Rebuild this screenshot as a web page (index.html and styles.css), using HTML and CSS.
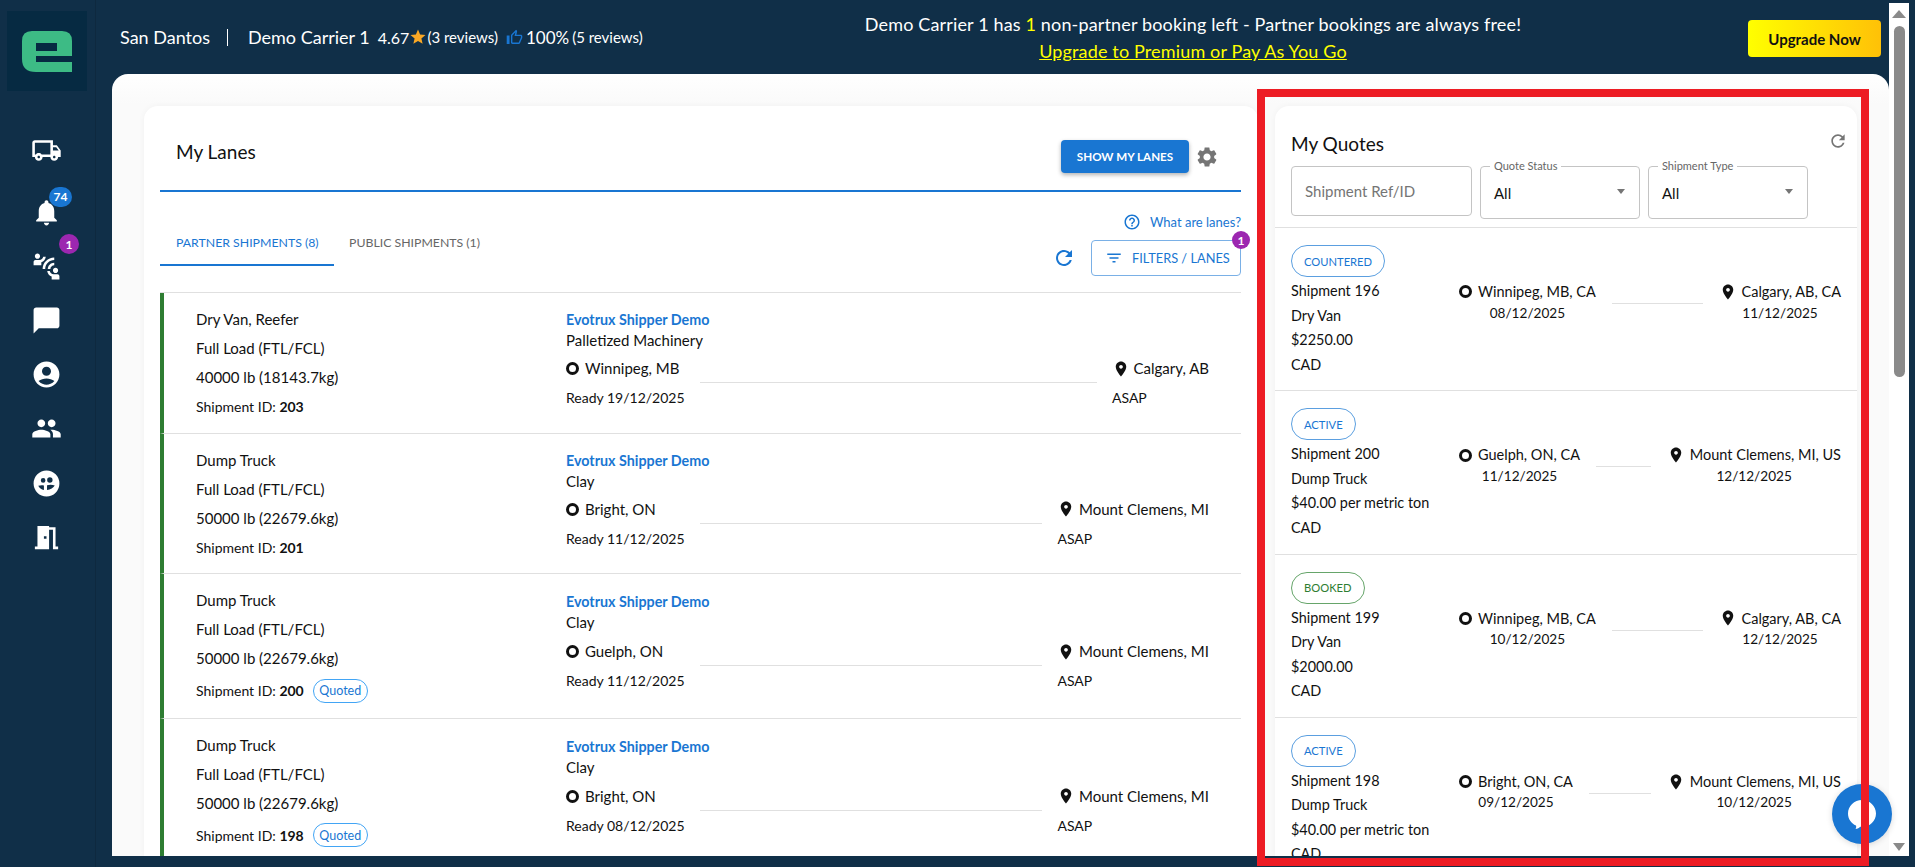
FILE: index.html
```html
<!DOCTYPE html>
<html lang="en">
<head>
<meta charset="UTF-8">
<title>My Lanes</title>
<link rel="stylesheet" href="styles.css">
</head>
<body>
<svg class="sprite" xmlns="http://www.w3.org/2000/svg">
 <symbol id="i-truck" viewBox="0 0 24 24"><path d="M20 8h-3V4H3c-1.1 0-2 .9-2 2v11h2c0 1.66 1.34 3 3 3s3-1.34 3-3h6c0 1.66 1.34 3 3 3s3-1.34 3-3h2v-5l-3-4zm-.5 1.5 1.96 2.5H17V9.5h2.5zM6 18c-.55 0-1-.45-1-1s.45-1 1-1 1 .45 1 1-.45 1-1 1zm2.22-3c-.55-.61-1.33-1-2.22-1s-1.67.39-2.22 1H3V6h12v9H8.22zM18 18c-.55 0-1-.45-1-1s.45-1 1-1 1 .45 1 1-.45 1-1 1z"/></symbol>
 <symbol id="i-bell" viewBox="0 0 24 24"><path d="M12 22c1.1 0 2-.9 2-2h-4c0 1.1.9 2 2 2zm6-6v-5c0-3.07-1.63-5.64-4.5-6.32V4c0-.83-.67-1.5-1.5-1.5s-1.5.67-1.5 1.5v.68C7.64 5.36 6 7.92 6 11v5l-2 2v1h16v-1l-2-2z"/></symbol>
 <symbol id="i-connect" viewBox="0 0 24 24"><path d="M11 14H9c0-4.97 4.03-9 9-9v2c-3.87 0-7 3.13-7 7zm7-3V9c-2.76 0-5 2.24-5 5h2c0-1.66 1.34-3 3-3zM7 4c0-1.11-.89-2-2-2s-2 .89-2 2 .89 2 2 2 2-.89 2-2zm4.45.5h-2C9.21 5.92 7.99 7 6.5 7h-3C2.67 7 2 7.67 2 8.5V11h6V8.74c1.86-.59 3.25-2.23 3.45-4.24zM19 17c1.11 0 2-.89 2-2s-.89-2-2-2-2 .89-2 2 .89 2 2 2zm1.5 1h-3c-1.49 0-2.71-1.08-2.95-2.5h-2c.2 2.01 1.59 3.65 3.45 4.24V22h6v-2.5c0-.83-.67-1.5-1.5-1.5z"/></symbol>
 <symbol id="i-chat" viewBox="0 0 24 24"><path d="M20 2H4c-1.1 0-2 .9-2 2v18l4-4h14c1.1 0 2-.9 2-2V4c0-1.1-.9-2-2-2z"/></symbol>
 <symbol id="i-account" viewBox="0 0 24 24"><path d="M12 2C6.48 2 2 6.48 2 12s4.48 10 10 10 10-4.48 10-10S17.52 2 12 2zm0 4c1.93 0 3.5 1.57 3.5 3.5S13.93 13 12 13s-3.5-1.57-3.5-3.5S10.07 6 12 6zm0 14c-2.03 0-4.43-.82-6.14-2.88C7.55 15.8 9.68 15 12 15s4.45.8 6.14 2.12C16.43 19.18 14.03 20 12 20z"/></symbol>
 <symbol id="i-people" viewBox="0 0 24 24"><path d="M16 11c1.66 0 2.99-1.34 2.99-3S17.66 5 16 5c-1.66 0-3 1.34-3 3s1.34 3 3 3zm-8 0c1.66 0 2.99-1.34 2.99-3S9.66 5 8 5C6.34 5 5 6.34 5 8s1.34 3 3 3zm0 2c-2.33 0-7 1.17-7 3.5V19h14v-2.5c0-2.33-4.67-3.5-7-3.5zm8 0c-.29 0-.62.02-.97.05 1.16.84 1.97 1.97 1.97 3.45V19h6v-2.5c0-2.33-4.67-3.5-7-3.5z"/></symbol>
 <symbol id="i-drivers" viewBox="0 0 24 24"><path fill-rule="evenodd" d="M12 2a10 10 0 1 0 0 20 10 10 0 0 0 0-20zM9.400 7.800a1.800 1.800 0 1 1 0 3.600 1.800 1.800 0 0 1 0-3.600zm5.200-.6a2.100 2.100 0 1 1 0 4.200 2.100 2.100 0 0 1 0-4.200zM5.600 13.800c1.500-.6 3-.7 4.400-.3v3.600c-2-.3-3.600-1.600-4.400-3.300zm6.800-.4c2-.7 4.200-.6 6 .2-.9 1.700-3.400 3.300-6 3.500z"/></symbol>
 <symbol id="i-door" viewBox="0 0 24 24"><path d="M14 6v15H3v-2h2V3h9v1h5v15h2v2h-4V6h-3zm-4 5v2h2v-2h-2z"/></symbol>
 <symbol id="i-gear" viewBox="0 0 24 24"><path d="M19.14 12.94c.04-.3.06-.61.06-.94 0-.32-.02-.64-.07-.94l2.030-1.580c.18-.14.23-.41.12-.61l-1.920-3.320c-.12-.22-.37-.29-.59-.22l-2.390.96c-.5-.38-1.030-.7-1.620-.94l-.36-2.540c-.04-.24-.24-.41-.48-.41h-3.840c-.24 0-.43.17-.47.41l-.36 2.540c-.59.24-1.130.57-1.620.94l-2.390-.96c-.22-.08-.47 0-.59.22L2.740 8.870c-.12.21-.08.47.12.61l2.030 1.580c-.05.3-.09.63-.09.94s.02.64.07.94l-2.030 1.580c-.18.14-.23.41-.12.61l1.920 3.320c.12.22.37.29.59.22l2.390-.96c.5.38 1.030.7 1.620.94l.36 2.540c.05.24.24.41.48.41h3.840c.24 0 .44-.17.47-.41l.36-2.540c.59-.24 1.130-.56 1.620-.94l2.390.96c.22.08.47 0 .59-.22l1.920-3.320c.12-.22.07-.47-.12-.61l-2.010-1.580zM12 15.600c-1.980 0-3.600-1.620-3.600-3.600s1.620-3.600 3.600-3.600 3.600 1.620 3.600 3.600-1.620 3.600-3.600 3.600z"/></symbol>
 <symbol id="i-refresh" viewBox="0 0 24 24"><path d="M17.650 6.350C16.200 4.900 14.210 4 12 4c-4.420 0-7.990 3.580-7.990 8s3.570 8 7.990 8c3.730 0 6.840-2.550 7.730-6h-2.080c-.82 2.330-3.040 4-5.650 4-3.310 0-6-2.690-6-6s2.690-6 6-6c1.660 0 3.140.69 4.220 1.780L13 11h7V4l-2.350 2.350z"/></symbol>
 <symbol id="i-filter" viewBox="0 0 24 24"><path d="M10 18h4v-2h-4v2zM3 6v2h18V6H3zm3 7h12v-2H6v2z"/></symbol>
 <symbol id="i-help" viewBox="0 0 24 24"><path d="M11 18h2v-2h-2v2zm1-16C6.480 2 2 6.480 2 12s4.480 10 10 10 10-4.480 10-10S17.520 2 12 2zm0 18c-4.410 0-8-3.590-8-8s3.590-8 8-8 8 3.590 8 8-3.590 8-8 8zm0-14c-2.210 0-4 1.790-4 4h2c0-1.100.9-2 2-2s2 .9 2 2c0 2-3 1.750-3 5h2c0-2.250 3-2.500 3-5 0-2.210-1.790-4-4-4z"/></symbol>
 <symbol id="i-pin" viewBox="0 0 24 24"><path d="M12 2C8.130 2 5 5.130 5 9c0 5.250 7 13 7 13s7-7.750 7-13c0-3.870-3.130-7-7-7zm0 9.500c-1.380 0-2.500-1.120-2.500-2.500s1.120-2.500 2.500-2.500 2.500 1.120 2.500 2.500-1.120 2.500-2.500 2.500z"/></symbol>
 <symbol id="i-star" viewBox="0 0 24 24"><path d="M12 17.270 18.180 21l-1.640-7.030L22 9.240l-7.190-.61L12 2 9.190 8.630 2 9.240l5.460 4.730L5.820 21z"/></symbol>
 <symbol id="i-thumb" viewBox="0 0 24 24"><path d="M9 21h9c.83 0 1.540-.5 1.840-1.220l3.020-7.050c.09-.23.14-.47.14-.73v-2c0-1.100-.9-2-2-2h-6.310l.95-4.570.03-.32c0-.41-.17-.79-.44-1.060L14.170 1 7.580 7.590C7.220 7.950 7 8.450 7 9v10c0 1.100.9 2 2 2zM9 9l4.340-4.340L12 10h9v2l-3 7H9V9zM1 9h4v12H1z"/></symbol>
</svg>

<div class="app">
 <aside class="sidebar">
  <div class="logo">
   <svg width="50" height="41" viewBox="0 0 50 41"><path fill="#3dbb85" fill-rule="evenodd" d="M10 0H40Q50 0 50 10V25H14V31H50V41H14Q0 41 0 28V10Q0 0 10 0ZM14 12V20H35V12Z"/></svg>
  </div>
  <nav class="side-nav">
   <a class="side-item first"><svg class="side-icon"><use href="#i-truck"/></svg></a>
   <a class="side-item"><svg class="side-icon"><use href="#i-bell"/></svg><span class="badge badge-blue">74</span></a>
   <a class="side-item"><svg class="side-icon"><use href="#i-connect"/></svg><span class="badge badge-purple">1</span></a>
   <a class="side-item"><svg class="side-icon"><use href="#i-chat"/></svg></a>
   <a class="side-item"><svg class="side-icon"><use href="#i-account"/></svg></a>
   <a class="side-item"><svg class="side-icon"><use href="#i-people"/></svg></a>
   <a class="side-item"><svg class="side-icon"><use href="#i-drivers"/></svg></a>
   <a class="side-item"><svg class="side-icon"><use href="#i-door"/></svg></a>
  </nav>
 </aside>

 <div class="center">
  <header class="topbar">
   <div class="who">
    <span class="who-name">San Dantos</span><span class="who-sep"></span><span class="who-name">Demo Carrier 1</span>
    <span class="rating">4.67</span><svg class="star"><use href="#i-star"/></svg><span class="reviews">(3 reviews)</span>
    <svg class="thumb"><use href="#i-thumb"/></svg><span class="percent">100%</span><span class="reviews wide">(5 reviews)</span>
   </div>
   <div class="banner">
    <div>Demo Carrier 1 has <span class="yellow">1</span> non-partner booking left - Partner bookings are always free!</div>
    <a class="upgrade-link">Upgrade to Premium or Pay As You Go</a>
   </div>
   <a class="upgrade-btn">Upgrade Now</a>
  </header>

  <main class="panel">
   <section class="card lanes">
    <div class="lanes-head">
     <h2 class="card-title">My Lanes</h2>
     <a class="btn-primary">SHOW MY LANES</a>
     <svg class="gear"><use href="#i-gear"/></svg>
    </div>
    <div class="lanes-tools">
     <div class="tabs">
      <a class="tab active">PARTNER SHIPMENTS (8)</a>
      <a class="tab">PUBLIC SHIPMENTS (1)</a>
     </div>
     <div class="tools-right">
      <a class="what"><svg class="what-icon"><use href="#i-help"/></svg>What are lanes?</a>
      <div class="filter-row">
       <svg class="refresh"><use href="#i-refresh"/></svg>
       <a class="btn-filter"><svg class="filter-icon"><use href="#i-filter"/></svg>FILTERS / LANES<span class="badge-small">1</span></a>
      </div>
     </div>
    </div>
    <div class="lane-list">
     <div class="lane">
      <div class="lane-info">
       <div>Dry Van, Reefer</div>
       <div>Full Load (FTL/FCL)</div>
       <div>40000 lb (18143.7kg)</div>
       <div class="id-line">Shipment ID: <b>203</b></div>
      </div>
      <div class="lane-detail">
       <a class="shipper">Evotrux Shipper Demo</a>
       <div>Palletized Machinery</div>
       <div class="route">
        <div><div class="place"><span class="ring"></span>Winnipeg, MB</div><div class="when">Ready 19/12/2025</div></div>
        <div class="route-line"></div>
        <div><div class="place"><svg class="pin"><use href="#i-pin"/></svg>Calgary, AB</div><div class="when">ASAP</div></div>
       </div>
      </div>
     </div>
     <div class="lane">
      <div class="lane-info">
       <div>Dump Truck</div>
       <div>Full Load (FTL/FCL)</div>
       <div>50000 lb (22679.6kg)</div>
       <div class="id-line">Shipment ID: <b>201</b></div>
      </div>
      <div class="lane-detail">
       <a class="shipper">Evotrux Shipper Demo</a>
       <div>Clay</div>
       <div class="route">
        <div><div class="place"><span class="ring"></span>Bright, ON</div><div class="when">Ready 11/12/2025</div></div>
        <div class="route-line"></div>
        <div><div class="place"><svg class="pin"><use href="#i-pin"/></svg>Mount Clemens, MI</div><div class="when">ASAP</div></div>
       </div>
      </div>
     </div>
     <div class="lane quoted">
      <div class="lane-info">
       <div>Dump Truck</div>
       <div>Full Load (FTL/FCL)</div>
       <div>50000 lb (22679.6kg)</div>
       <div class="id-line">Shipment ID: <b>200</b><span class="chip-quoted">Quoted</span></div>
      </div>
      <div class="lane-detail">
       <a class="shipper">Evotrux Shipper Demo</a>
       <div>Clay</div>
       <div class="route">
        <div><div class="place"><span class="ring"></span>Guelph, ON</div><div class="when">Ready 11/12/2025</div></div>
        <div class="route-line"></div>
        <div><div class="place"><svg class="pin"><use href="#i-pin"/></svg>Mount Clemens, MI</div><div class="when">ASAP</div></div>
       </div>
      </div>
     </div>
     <div class="lane quoted">
      <div class="lane-info">
       <div>Dump Truck</div>
       <div>Full Load (FTL/FCL)</div>
       <div>50000 lb (22679.6kg)</div>
       <div class="id-line">Shipment ID: <b>198</b><span class="chip-quoted">Quoted</span></div>
      </div>
      <div class="lane-detail">
       <a class="shipper">Evotrux Shipper Demo</a>
       <div>Clay</div>
       <div class="route">
        <div><div class="place"><span class="ring"></span>Bright, ON</div><div class="when">Ready 08/12/2025</div></div>
        <div class="route-line"></div>
        <div><div class="place"><svg class="pin"><use href="#i-pin"/></svg>Mount Clemens, MI</div><div class="when">ASAP</div></div>
       </div>
      </div>
     </div>
    </div>
   </section>

   <section class="card quotes">
    <div class="quotes-head">
     <div class="quotes-title">
      <h2 class="card-title">My Quotes</h2>
      <svg class="quotes-refresh"><use href="#i-refresh"/></svg>
     </div>
     <div class="quote-filters">
      <div class="field-search">Shipment Ref/ID</div>
      <div class="field-select"><span class="field-label">Quote Status</span>All<i class="caret"></i></div>
      <div class="field-select"><span class="field-label">Shipment Type</span>All<i class="caret"></i></div>
     </div>
    </div>
    <div class="quote">
     <span class="status">COUNTERED</span>
     <div class="quote-body">
      <div class="quote-info"><div>Shipment 196</div><div>Dry Van</div><div>$2250.00</div><div>CAD</div></div>
      <div class="quote-route">
       <div class="stop"><div class="place"><span class="ring"></span>Winnipeg, MB, CA</div><div class="stop-date">08/12/2025</div></div>
       <div class="quote-line"></div>
       <div class="stop"><div class="place"><svg class="pin"><use href="#i-pin"/></svg>Calgary, AB, CA</div><div class="stop-date">11/12/2025</div></div>
      </div>
     </div>
    </div>
    <div class="quote">
     <span class="status">ACTIVE</span>
     <div class="quote-body">
      <div class="quote-info"><div>Shipment 200</div><div>Dump Truck</div><div>$40.00 per metric ton</div><div>CAD</div></div>
      <div class="quote-route">
       <div class="stop"><div class="place"><span class="ring"></span>Guelph, ON, CA</div><div class="stop-date">11/12/2025</div></div>
       <div class="quote-line"></div>
       <div class="stop"><div class="place"><svg class="pin"><use href="#i-pin"/></svg>Mount Clemens, MI, US</div><div class="stop-date">12/12/2025</div></div>
      </div>
     </div>
    </div>
    <div class="quote">
     <span class="status green">BOOKED</span>
     <div class="quote-body">
      <div class="quote-info"><div>Shipment 199</div><div>Dry Van</div><div>$2000.00</div><div>CAD</div></div>
      <div class="quote-route">
       <div class="stop"><div class="place"><span class="ring"></span>Winnipeg, MB, CA</div><div class="stop-date">10/12/2025</div></div>
       <div class="quote-line"></div>
       <div class="stop"><div class="place"><svg class="pin"><use href="#i-pin"/></svg>Calgary, AB, CA</div><div class="stop-date">12/12/2025</div></div>
      </div>
     </div>
    </div>
    <div class="quote">
     <span class="status">ACTIVE</span>
     <div class="quote-body">
      <div class="quote-info"><div>Shipment 198</div><div>Dump Truck</div><div>$40.00 per metric ton</div><div>CAD</div></div>
      <div class="quote-route">
       <div class="stop"><div class="place"><span class="ring"></span>Bright, ON, CA</div><div class="stop-date">09/12/2025</div></div>
       <div class="quote-line"></div>
       <div class="stop"><div class="place"><svg class="pin"><use href="#i-pin"/></svg>Mount Clemens, MI, US</div><div class="stop-date">10/12/2025</div></div>
      </div>
     </div>
    </div>
   </section>
  </main>
 </div>

 <div class="scrollbar">
  <i class="scroll-up"></i>
  <div class="scroll-thumb"></div>
  <i class="scroll-down"></i>
 </div>
</div>

<div class="chat-widget">
 <svg width="32" height="32" viewBox="0 0 32 32"><path fill="#fff" d="M16 2C8.300 2 2 8 2 15.500c0 5.500 3.300 10 8 12 .4 1.300.2 2.500-.5 3.500 2 0 3.700-1 4.800-2.200.6.100 1.100.1 1.700.1 7.700 0 14-5.900 14-13.400S23.700 2 16 2z"/></svg>
</div>
<div class="red-frame"></div>
</body>
</html>
```

FILE: styles.css
```css
*{box-sizing:border-box}
html,body{margin:0;height:100%;overflow:hidden}
body{background:#102f48;color:#111;font-family:Lato,"Open Sans",sans-serif;font-size:15px}
a{cursor:pointer}
.sprite{display:none}
svg{fill:currentColor;display:block;flex:none}

.app{display:flex;height:867px;padding-bottom:11px}
.sidebar{width:96px;flex:none;margin:0 16px -11px 0;color:#fff;border-right:1px solid rgba(0,0,0,.12)}
.logo{width:80px;height:80px;margin:11px 0 0 7px;background:#062a42;display:flex;align-items:center;justify-content:center}
.side-nav{margin-top:32px;display:flex;flex-direction:column}
.side-item{position:relative;height:54.2px;width:92px;display:flex;align-items:center;justify-content:center}
.side-item.first{margin-bottom:7.8px}
.side-icon{width:31px;height:31px}
.badge{position:absolute;display:flex;align-items:center;justify-content:center;height:20px;border-radius:10px;font-size:12px;font-weight:700;color:#fff}
.badge-blue{left:49px;top:2px;width:23px;background:#1976d2}
.badge-purple{left:59px;top:-5px;width:20px;background:#9c27b0}

.center{flex:1;min-width:0;display:flex;flex-direction:column}
.topbar{height:74px;flex:none;display:flex;align-items:center;padding:0 8px;color:#fff;font-size:18px;letter-spacing:.15px}
.who{width:660px;flex:none;display:flex;align-items:center}
.who-name{letter-spacing:0}
.who-sep{width:1px;height:17px;background:#fff;margin:0 20px 0 17px}
.rating{margin-left:8px;font-size:16px;letter-spacing:0}
.star{width:18px;height:18px;color:#f9a825;margin:0}
.reviews{font-size:15px;letter-spacing:0}
.reviews.wide{margin-left:3px}
.thumb{width:17px;height:17px;color:#1976d2;margin:0 3px 0 8px}
.percent{font-size:17px;letter-spacing:0}
.banner{width:826px;flex:none;text-align:center;line-height:27px;margin-top:1px}
.yellow{color:#ffff00}
.upgrade-link{color:#ffff00;text-decoration:underline}
.upgrade-btn{margin-left:auto;width:133px;height:37px;border-radius:4px;background:linear-gradient(90deg,#ffff00,#ffc107);color:#111;font-size:15px;font-weight:700;letter-spacing:0;display:flex;align-items:center;justify-content:center;margin-top:3px}

.panel{flex:1;min-height:0;overflow:hidden;display:flex;gap:17px;padding:32px 32px 0;background:linear-gradient(#fff,#fafafa 30px);border-radius:16px 16px 0 0}
.card{background:#fff;border-radius:14px 14px 0 0;box-shadow:0 0 6px rgba(0,0,0,.04)}
.card-title{margin:0;font-size:19px;font-weight:400;color:#111}
.lanes{width:1114px;flex:none}
.quotes{width:582px;flex:none}

.lanes-head{height:86px;margin:0 17px 0 16px;padding:34px 22px 0 16px;display:flex;align-items:flex-start;border-bottom:2px solid #1976d2}
.lanes-head .card-title{line-height:24px;margin-right:auto}
.btn-primary{width:128px;height:33px;border-radius:4px;background:#1976d2;color:#fff;font-size:11.6px;font-weight:700;display:flex;align-items:center;justify-content:center;box-shadow:0 2px 4px rgba(0,0,0,.3)}
.gear{width:24px;height:24px;color:#757575;margin:5px 0 0 6px}

.lanes-tools{height:100px;margin:0 17px 0 16px;display:flex;justify-content:space-between;align-items:flex-start}
.tabs{display:flex;margin-top:32px;font-size:12.3px}
.tab{height:42px;padding:11px 0 0 15px;color:#666}
.tab.active{width:174px;padding-left:16px;color:#1976d2;border-bottom:2px solid #1976d2}
.tools-right{display:flex;flex-direction:column;align-items:flex-end;padding-top:21px}
.what{display:flex;align-items:center;height:18px;color:#1976d2;font-size:13px}
.what-icon{width:18px;height:18px;margin-right:9px}
.filter-row{display:flex;align-items:center;margin-top:9px}
.refresh{width:24px;height:24px;color:#1976d2;margin-right:15px}
.btn-filter{position:relative;width:150px;height:36px;border:1px solid #7ab0e6;border-radius:4px;display:flex;align-items:center;padding-left:13px;color:#1976d2;font-size:12.8px}
.filter-icon{width:18px;height:18px;margin-right:9px}
.badge-small{position:absolute;right:-10px;top:-10px;width:18px;height:18px;border-radius:50%;background:#9c27b0;color:#fff;font-size:12px;font-weight:700;display:flex;align-items:center;justify-content:center}

.lane-list{margin:0 17px 0 16px;border-top:1px solid #e0e0e0}
.lane{display:flex;border-left:4px solid #2e7d32;border-bottom:1px solid #e0e0e0;padding:0 32px}
.lane-info{width:370px;flex:none;padding-top:12px;padding-bottom:11.5px;line-height:29px}
.id-line{font-size:14px}
.lane.quoted .id-line{display:flex;align-items:center;height:31px;margin-top:2px;white-space:pre}
.chip-quoted{margin-left:9px;width:55px;height:24px;border:1px solid #42a5f5;border-radius:12px;color:#1976d2;font-size:12.5px;display:flex;align-items:center;justify-content:center}
.lane-detail{flex:1;min-width:0;padding-top:16px;line-height:21px}
.lane.quoted .lane-detail{padding-top:17px}
.shipper{display:block;color:#1976d2;font-weight:700;font-size:14.3px}
.route{display:flex;margin-top:7px}
.lane.quoted .route{margin-top:8px}
.place{display:flex;align-items:center}
.when{margin-top:8px;font-size:14px}
.ring{width:13px;height:13px;border:3px solid #111;border-radius:50%;margin-right:6px;flex:none}
.pin{width:18px;height:18px;margin-right:3.5px}
.route-line{flex:1;height:1px;background:#e0e0e0;margin:24px 15px 0}

.quotes-head{padding:26px 16px 8px;border-bottom:1px solid #e0e0e0}
.quotes-title{display:flex;justify-content:space-between;align-items:flex-start;height:24px}
.quotes-title .card-title{line-height:24px}
.quotes-refresh{width:20px;height:20px;color:#757575;margin:-1px -7px 0 0}
.quote-filters{display:flex;align-items:flex-start;gap:8px;margin-top:10px}
.field-search{width:181px;height:50px;border:1px solid #c4c4c4;border-radius:4px;padding-left:13px;line-height:48px;color:#757575}
.field-select{position:relative;width:160px;height:53px;border:1px solid #c4c4c4;border-radius:4px;padding:16px 0 0 13px;line-height:20px}
.field-label{position:absolute;left:9px;top:-7px;padding:0 4px;background:#fff;font-size:11px;line-height:12px;color:#666;white-space:nowrap}
.caret{position:absolute;right:14px;top:22px;border-left:4.5px solid transparent;border-right:4.5px solid transparent;border-top:5px solid #757575}

.quote{padding:17px 16px 13.3px;border-bottom:1px solid #e0e0e0}
.status{display:inline-flex;align-items:center;height:32px;padding:0 12px;border:1px solid #5b9fe0;border-radius:16px;color:#1976d2;font-size:11.2px;vertical-align:top}
.status.green{border-color:#66a56a;color:#2e7d32}
.quote-body{display:flex;margin-top:2px}
.quote-info{width:168px;flex:none;line-height:24.5px;font-size:14.4px}
.quote-route{flex:1;min-width:0;display:flex;align-items:flex-start;margin-top:2px;line-height:21.5px;font-size:14.5px}
.quote-route .pin{margin-right:4.5px}
.stop{text-align:center}
.stop-date{font-size:13.6px}
.quote-line{flex:1;height:1px;background:#e0e0e0;margin:22px 16px 0}

.scrollbar{width:20px;flex:none;margin:3px 6px 0 0;background:#fff;display:flex;flex-direction:column;align-items:center;padding:0 0 5px}
.scroll-up{margin-top:7px;border-left:7px solid transparent;border-right:7px solid transparent;border-bottom:8px solid #8a8a8a}
.scroll-thumb{width:11px;height:351px;margin-top:8px;border-radius:6px;background:#8a8a8a}
.scroll-down{margin-top:auto;border-left:6px solid transparent;border-right:6px solid transparent;border-top:8px solid #8a8a8a}

.chat-widget{position:fixed;left:1832px;top:784px;width:60px;height:60px;border-radius:50%;background:#1976d2;display:flex;align-items:center;justify-content:center;box-shadow:0 1px 6px rgba(0,0,0,.15)}
.red-frame{position:fixed;left:1257px;top:89px;width:612px;height:777px;border:8px solid #ed1c24;pointer-events:none}
```
